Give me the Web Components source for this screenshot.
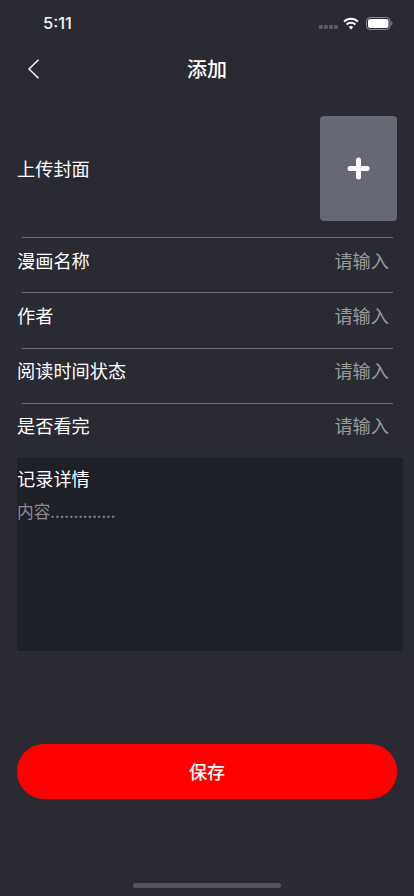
<!DOCTYPE html>
<html lang="zh">
<head>
<meta charset="utf-8">
<title>添加</title>
<style>
  html, body { margin: 0; padding: 0; background: #2a2a33; }
  body { font-family: "Noto Sans CJK SC", "Liberation Sans", sans-serif; }
</style>
</head>
<body>
<add-page>
  <status-bar></status-bar>
  <nav-bar title="添加"></nav-bar>
  <cover-row label="上传封面"></cover-row>
  <form-row label="漫画名称" placeholder="请输入"></form-row>
  <form-row label="作者" placeholder="请输入"></form-row>
  <form-row label="阅读时间状态" placeholder="请输入"></form-row>
  <form-row label="是否看完" placeholder="请输入"></form-row>
  <detail-box label="记录详情" placeholder="内容.............."></detail-box>
  <save-button>保存</save-button>
  <home-bar></home-bar>
</add-page>
<script>
class AddPage extends HTMLElement {
  connectedCallback() {
    this.attachShadow({ mode: 'open' });
    this.shadowRoot.innerHTML = `
      <style>
        :host {
          display: flex;
          flex-direction: column;
          width: 414px;
          height: 896px;
          overflow: hidden;
          background: #2a2a33;
          color: #fff;
          font-family: "Noto Sans CJK SC", "Liberation Sans", sans-serif;
        }
      </style>
      <slot></slot>
    `;
  }
}

class StatusBar extends HTMLElement {
  connectedCallback() {
    this.attachShadow({ mode: 'open' });
    this.shadowRoot.innerHTML = `
      <style>
        :host {
          display: flex;
          justify-content: space-between;
          align-items: center;
          height: 46px;
          padding: 0 21px 0 43px;
          box-sizing: border-box;
        }
        .time {
          font: 500 16.5px/1 Inter, "Liberation Sans", sans-serif;
          color: #f2f2f2;
        }
        .icons { display: flex; align-items: center; gap: 5px; }
        svg { display: block; }
      </style>
      <span class="time">5:11</span>
      <div class="icons">
        <svg width="19" height="6" viewBox="0 0 19 6" style="margin-top:7px">
          <rect x="0" y="1" width="4" height="4" rx="1" fill="#5a5a62"/>
          <rect x="5" y="1" width="4" height="4" rx="1" fill="#5a5a62"/>
          <rect x="10" y="1" width="4" height="4" rx="1" fill="#5a5a62"/>
          <rect x="15" y="1" width="4" height="4" rx="1" fill="#5a5a62"/>
        </svg>
        <svg width="16" height="13" viewBox="0 0 16 13" fill="none" stroke="#fff" stroke-width="2">
          <path d="M1 4.6a10 10 0 0 1 14 0"/>
          <path d="M3.6 7.4a6.4 6.4 0 0 1 8.8 0"/>
          <path d="M8 12.6l-2.2-2.6a3.2 3.2 0 0 1 4.4 0z" fill="#fff" stroke="none"/>
        </svg>
        <svg width="27" height="13" viewBox="0 0 27 13" style="margin-left:2px">
          <rect x="0.5" y="0.5" width="23.5" height="12" rx="3.5" fill="none" stroke="#8a8a90"/>
          <rect x="2" y="2" width="20.5" height="9" rx="2" fill="#fff"/>
          <path d="M25.2 4.6c.9.3 1.3 1 1.3 1.9s-.4 1.6-1.3 1.9z" fill="#8a8a90"/>
        </svg>
      </div>
    `;
  }
}

class NavBar extends HTMLElement {
  connectedCallback() {
    this.attachShadow({ mode: 'open' });
    this.shadowRoot.innerHTML = `
      <style>
        :host {
          display: flex;
          align-items: center;
          justify-content: center;
          position: relative;
          height: 46px;
        }
        .back { position: absolute; left: 27px; top: 13px; display: block; }
        .title { font-size: 20px; font-weight: 500; line-height: 1; color: #fff; }
      </style>
      <svg class="back" width="13" height="20" viewBox="0 0 13 20" fill="none" stroke="#fff" stroke-width="1.4">
        <path d="M11.5 0.8L2 10l9.5 9.2"/>
      </svg>
      <span class="title">${this.getAttribute('title')}</span>
    `;
  }
}

class CoverRow extends HTMLElement {
  connectedCallback() {
    this.attachShadow({ mode: 'open' });
    this.shadowRoot.innerHTML = `
      <style>
        :host {
          display: flex;
          justify-content: space-between;
          align-items: center;
          height: 105px;
          margin: 24px 0 16px;
          padding: 0 17px;
        }
        .label { font-size: 18.2px; line-height: 1; color: #fff; }
        .box {
          width: 77px;
          height: 105px;
          border-radius: 4px;
          background: #666873;
          display: flex;
          align-items: center;
          justify-content: center;
        }
        svg { display: block; }
      </style>
      <span class="label">${this.getAttribute('label')}</span>
      <div class="box">
        <svg width="23" height="23" viewBox="0 0 23 23" stroke="#fff" stroke-width="5" stroke-linecap="round">
          <path d="M11.5 3v17M3 11.5h17"/>
        </svg>
      </div>
    `;
  }
}

class FormRow extends HTMLElement {
  connectedCallback() {
    this.attachShadow({ mode: 'open' });
    this.shadowRoot.innerHTML = `
      <style>
        :host {
          display: flex;
          justify-content: space-between;
          align-items: center;
          position: relative;
          box-sizing: border-box;
          height: 55.3px;
          padding: 0 25px 10px 17px;
        }
        :host::before {
          content: "";
          position: absolute;
          left: 22px;
          right: 21px;
          top: 0;
          height: 1px;
          background: #6d6d74;
        }
        .label { font-size: 18.2px; line-height: 1; color: #fff; }
        .hint { font-size: 18.2px; line-height: 1; color: #9a9a9a; }
      </style>
      <span class="label">${this.getAttribute('label')}</span>
      <span class="hint">${this.getAttribute('placeholder')}</span>
    `;
  }
}

class DetailBox extends HTMLElement {
  connectedCallback() {
    this.attachShadow({ mode: 'open' });
    this.shadowRoot.innerHTML = `
      <style>
        :host {
          display: block;
          box-sizing: border-box;
          width: 386px;
          height: 193px;
          margin-left: 17px;
          padding-top: 11px;
          background: #1e2027;
        }
        .label { font-size: 18.2px; line-height: 18px; color: #fff; }
        .hint { margin-top: 16px; font-size: 16.7px; line-height: 17px; color: #8c8c8c; }
      </style>
      <div class="label">${this.getAttribute('label')}</div>
      <div class="hint">${this.getAttribute('placeholder')}</div>
    `;
  }
}

class SaveButton extends HTMLElement {
  connectedCallback() {
    this.attachShadow({ mode: 'open' });
    this.shadowRoot.innerHTML = `
      <style>
        :host {
          display: flex;
          align-items: center;
          justify-content: center;
          box-sizing: border-box;
          width: 380px;
          height: 55px;
          margin: 93px 0 0 17px;
          padding-bottom: 2px;
          border-radius: 27px;
          background: #ff0000;
          color: #fff;
          font-size: 18px;
          font-weight: 500;
        }
      </style>
      <slot></slot>
    `;
  }
}

class HomeBar extends HTMLElement {
  connectedCallback() {
    this.attachShadow({ mode: 'open' });
    this.shadowRoot.innerHTML = `
      <style>
        :host {
          display: block;
          width: 148px;
          height: 5px;
          margin: 84px 0 0 133px;
          border-radius: 3px;
          background: #57575b;
        }
      </style>
    `;
  }
}

customElements.define('add-page', AddPage);
customElements.define('status-bar', StatusBar);
customElements.define('nav-bar', NavBar);
customElements.define('cover-row', CoverRow);
customElements.define('form-row', FormRow);
customElements.define('detail-box', DetailBox);
customElements.define('save-button', SaveButton);
customElements.define('home-bar', HomeBar);
</script>
</body>
</html>
